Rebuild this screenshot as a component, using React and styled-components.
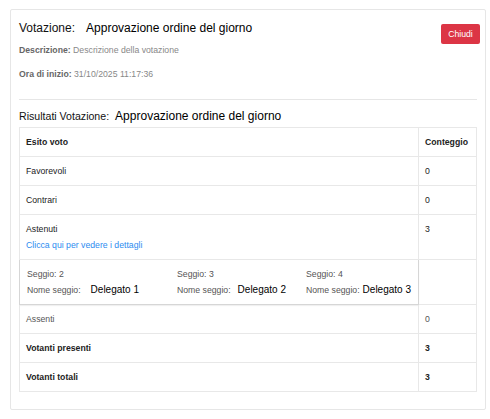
import React from 'react'
import styled, { createGlobalStyle } from 'styled-components'

const GlobalStyle = createGlobalStyle`
    body {
        margin: 0;
        background: #ffffff;
        font-family: "Liberation Sans", Arial, sans-serif;
    }
`

const Card = styled.div`
    margin: 9px 4px 9px 10px;
    padding: 8px 8px 17px 8px;
    border: 1px solid #e6e6e6;
    border-radius: 2px;
    background: #fff;
`

const Header = styled.div`
    display: flex;
    justify-content: space-between;
    align-items: flex-start;
`

const Title = styled.h2`
    margin: 0;
    font-weight: normal;
    line-height: ${p => p.lh || 20}px;
    color: #111;
    font-size: ${p => p.size || 12}px;
    display: flex;
    align-items: baseline;
`

const TitleValue = styled.span`
    font-size: 12px;
    margin-left: ${p => p.gap || 6}px;
    color: #000;
`

const CloseButton = styled.button`
    margin-top: 6px;
    margin-right: -3px;
    width: 39px;
    height: 20px;
    padding: 0;
    border: none;
    border-radius: 2px;
    background: #dc3545;
    color: #fff;
    font-family: inherit;
    font-size: 8.7px;
`

const Meta = styled.div`
    margin-top: ${p => p.top}px;
    line-height: 12px;
    font-size: 8.7px;
    color: #888;
    b {
        color: #666;
    }
`

const Divider = styled.hr`
    margin: 19px 0 8px 0;
    border: none;
    border-top: 1px solid #e6e6e6;
`

const Table = styled.table`
    margin-top: 3px;
    width: 100%;
    border-collapse: collapse;
    border: 1px solid #e3e3e3;
    font-size: 8.7px;
    color: #222;
`

const Cell = styled.td`
    border: 1px solid ${p => (p.boxed ? '#d6d6d6' : '#e8e8e8')};
    box-shadow: ${p => (p.boxed ? '0 1px 1px rgba(0, 0, 0, 0.06)' : 'none')};
    padding: ${p => (p.boxed ? '8px 7px' : '8px 6px')};
    line-height: 12px;
    vertical-align: top;
    text-align: left;
    font-weight: ${p => (p.bold ? 'bold' : 'normal')};
    color: ${p => (p.muted ? '#555' : '#222')};
    width: ${p => p.w || 'auto'};
`

const Link = styled.a`
    display: block;
    margin-top: 4px;
    color: #2d8cf0;
    text-decoration: none;
    cursor: pointer;
`

const Details = styled.div`
    display: grid;
    grid-template-columns: 150px 129px 1fr;
    color: #555;
    white-space: nowrap;
`

const Seat = styled.div`
    display: flex;
    flex-direction: column;
    gap: 4px;
`

const SeatName = styled.span`
    font-size: 10px;
    color: #000;
    margin-left: ${p => p.gap}px;
`

const seats = [
    { id: 2, name: 'Delegato 1', gap: 10 },
    { id: 3, name: 'Delegato 2', gap: 7 },
    { id: 4, name: 'Delegato 3', gap: 3 },
]

export default function App() {
    return (
        <>
            <GlobalStyle />
            <Card>
                <Header>
                    <Title>
                        Votazione:
                        <TitleValue gap={11}>Approvazione ordine del giorno</TitleValue>
                    </Title>
                    <CloseButton>Chiudi</CloseButton>
                </Header>
                <Meta top={0}>
                    <b>Descrizione:</b> Descrizione della votazione
                </Meta>
                <Meta top={12}>
                    <b>Ora di inizio:</b> 31/10/2025 11:17:36
                </Meta>
                <Divider />
                <Title size={10.6} lh={16}>
                    Risultati Votazione:
                    <TitleValue gap={6}>Approvazione ordine del giorno</TitleValue>
                </Title>
                <Table>
                    <tbody>
                        <tr>
                            <Cell bold>Esito voto</Cell>
                            <Cell bold w="45px">Conteggio</Cell>
                        </tr>
                        <tr>
                            <Cell>Favorevoli</Cell>
                            <Cell>0</Cell>
                        </tr>
                        <tr>
                            <Cell>Contrari</Cell>
                            <Cell>0</Cell>
                        </tr>
                        <tr>
                            <Cell>
                                Astenuti
                                <Link>Clicca qui per vedere i dettagli</Link>
                            </Cell>
                            <Cell>3</Cell>
                        </tr>
                        <tr>
                            <Cell boxed>
                                <Details>
                                    {seats.map(s => (
                                        <Seat key={s.id}>
                                            <span>Seggio: {s.id}</span>
                                            <span>
                                                Nome seggio:
                                                <SeatName gap={s.gap}>{s.name}</SeatName>
                                            </span>
                                        </Seat>
                                    ))}
                                </Details>
                            </Cell>
                            <Cell />
                        </tr>
                        <tr>
                            <Cell muted>Assenti</Cell>
                            <Cell muted>0</Cell>
                        </tr>
                        <tr>
                            <Cell bold>Votanti presenti</Cell>
                            <Cell bold>3</Cell>
                        </tr>
                        <tr>
                            <Cell bold>Votanti totali</Cell>
                            <Cell bold>3</Cell>
                        </tr>
                    </tbody>
                </Table>
            </Card>
        </>
    )
}
